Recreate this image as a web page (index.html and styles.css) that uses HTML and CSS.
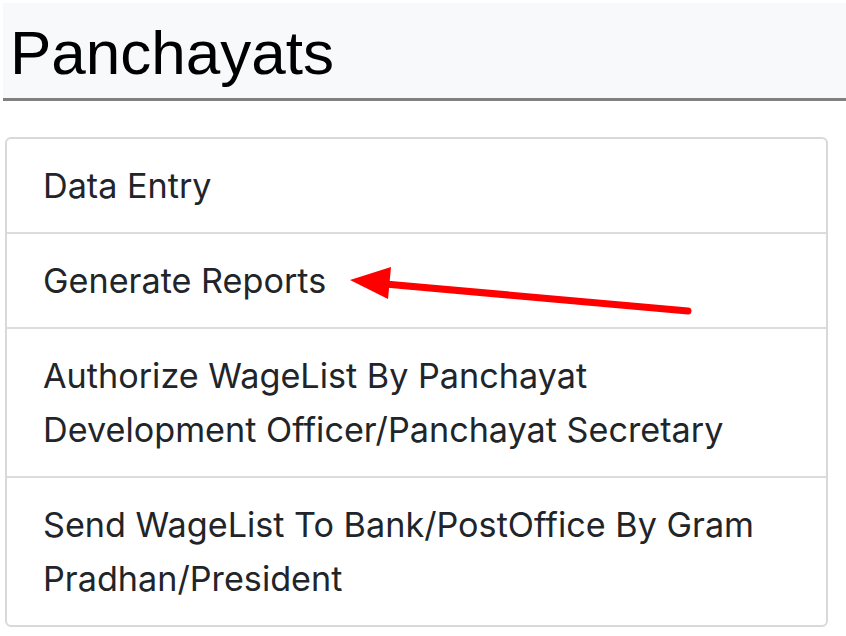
FILE: index.html
```html
<!DOCTYPE html>
<html>
<head>
<meta charset="utf-8">
<link rel="stylesheet" href="styles.css">
</head>
<body>
<div class="page">
  <header class="title-bar">
    <h1 class="title">Panchayats</h1>
  </header>
  <ul class="menu">
    <li class="menu-item">Data Entry</li>
    <li class="menu-item">Generate Reports</li>
    <li class="menu-item">Authorize WageList By Panchayat Development Officer/Panchayat Secretary</li>
    <li class="menu-item">Send WageList To Bank/PostOffice By Gram Pradhan/President</li>
  </ul>
  <svg class="arrow" width="846" height="636" viewBox="0 0 846 636">
    <line x1="688" y1="311" x2="385" y2="284" stroke="#ff0000" stroke-width="7" stroke-linecap="round"/>
    <polygon points="350,280 391,267 388,299" fill="#ff0000"/>
  </svg>
</div>
</body>
</html>
```

FILE: styles.css
```css
html, body {
  margin: 0;
  padding: 0;
  background: #ffffff;
}
.page {
  position: relative;
  width: 846px;
  height: 636px;
  overflow: hidden;
}
.title-bar {
  margin: 3px 0 0 3px;
  height: 98px;
  box-sizing: border-box;
  background: #f8f9fa;
  border-bottom: 3px solid #808080;
  padding: 5px 0 0 7px;
}
.title {
  margin: 0;
  font-family: "Liberation Sans", Arial, sans-serif;
  font-weight: normal;
  font-size: 62px;
  line-height: 90px;
  color: #000;
}
.menu {
  list-style: none;
  margin: 36px 0 0 5px;
  padding: 0;
  width: 823px;
  border: 2px solid #d9d9d9;
  border-radius: 6px;
  box-sizing: border-box;
  font-family: Inter, "Noto Sans", sans-serif;
  font-size: 34.2px;
  line-height: 54px;
  color: #212529;
}
.menu-item {
  padding: 20px 36px 19px;
  border-top: 2px solid #dcdcdc;
}
.menu-item:first-child {
  border-top: none;
}
.arrow {
  position: absolute;
  left: 0;
  top: 0;
  pointer-events: none;
}
```
